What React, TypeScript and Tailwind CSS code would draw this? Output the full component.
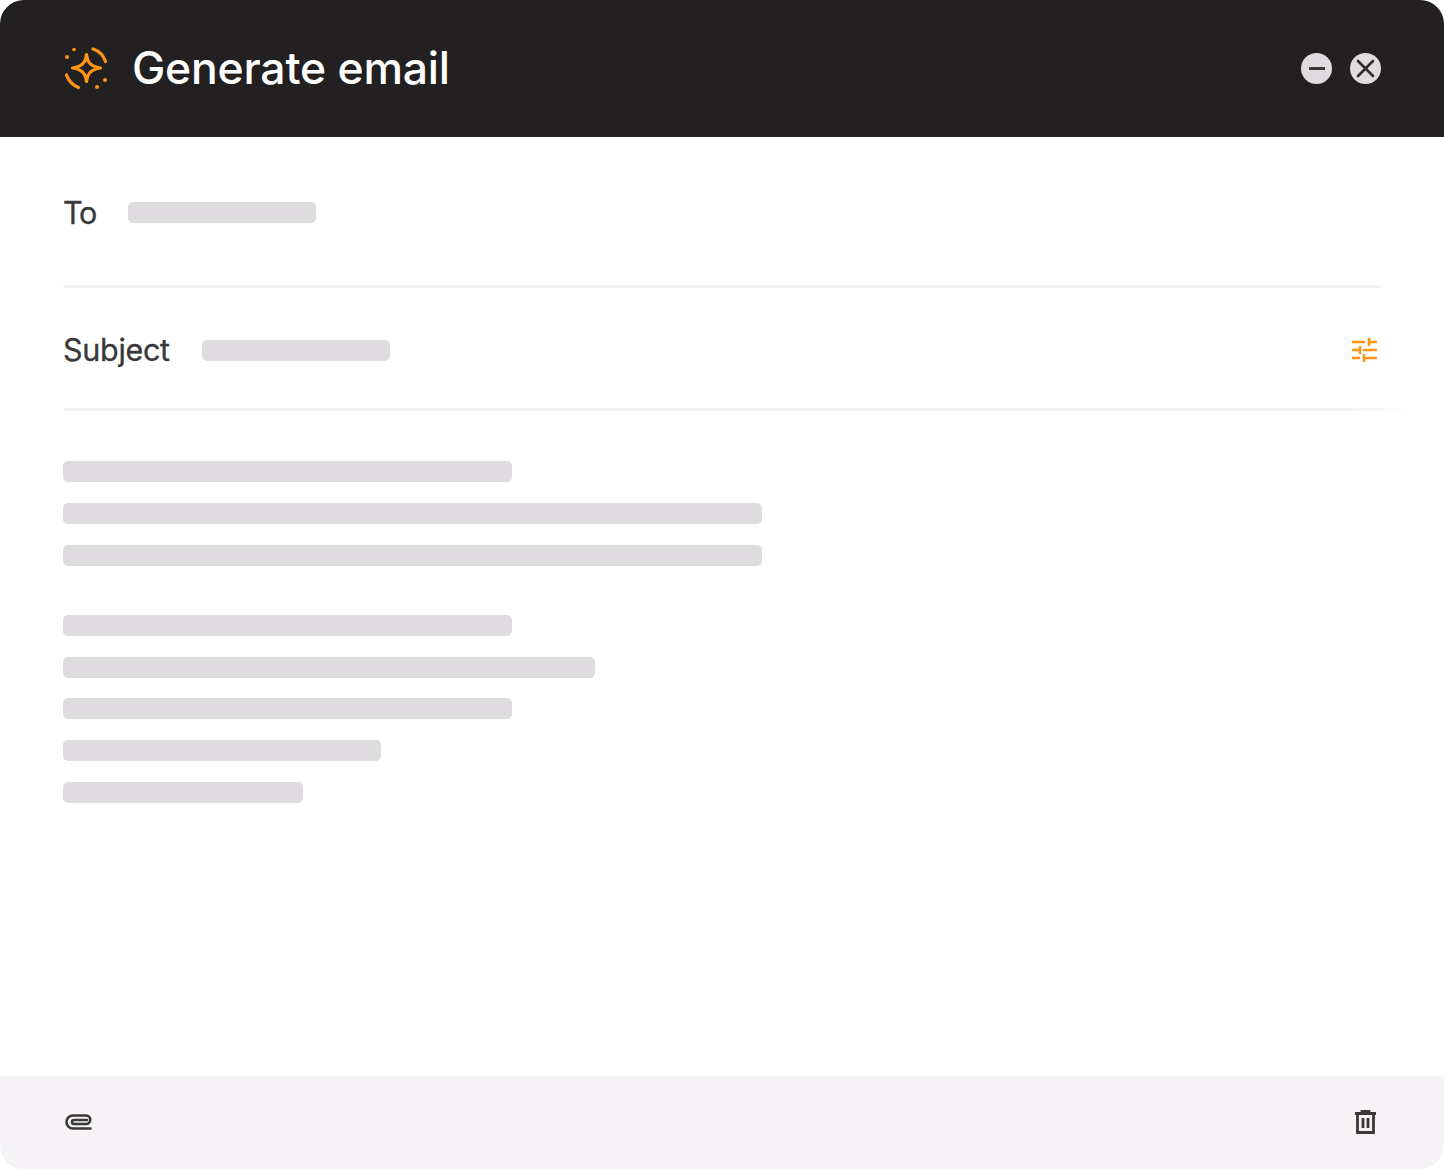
export default function App() {
  const lines1 = ["w-[449px]", "w-[699px]", "w-[699px]"];
  const lines2 = ["w-[449px]", "w-[532px]", "w-[449px]", "w-[318px]", "w-[240px]"];
  return (
    <div className="w-[1444px] h-[1170px] bg-white font-['Inter',sans-serif] flex flex-col">
      <div className="h-[1169px] flex flex-col rounded-[24px] overflow-hidden bg-white">
        <header className="h-[137px] shrink-0 bg-[#222021] flex items-center justify-between pl-[64px] pr-[63px]">
          <div className="flex items-center gap-[24px]">
            <svg width="45" height="45" viewBox="0 0 45 45" fill="none" stroke="#ff9414" strokeWidth="3.2" strokeLinecap="round" strokeLinejoin="round">
              <path d="M22.5 8.5 C23.5 17 27 20.5 36.5 22 C27 23.5 23.5 27 22.5 35.5 C21.5 27 18 23.5 8.5 22 C18 20.5 21.5 17 22.5 8.5 Z" />
              <path d="M29 3 C35 5 39.5 9.5 41.5 15.5" />
              <path d="M2.5 29 C4.5 35 8.5 39 14.5 41.5" />
              <circle cx="10" cy="3.5" r="1.8" fill="#ff9414" stroke="none" />
              <circle cx="3" cy="11" r="2" fill="#ff9414" stroke="none" />
              <circle cx="41" cy="34" r="2" fill="#ff9414" stroke="none" />
              <circle cx="33" cy="41" r="2" fill="#ff9414" stroke="none" />
            </svg>
            <h1 className="text-[44.5px] leading-none font-medium text-white tracking-[-0.2px] ml-[-1px]">Generate email</h1>
          </div>
          <div className="flex items-center gap-[18px]">
            <div className="w-[31px] h-[31px] rounded-full bg-[#dedcdf] flex items-center justify-center">
              <div className="w-[16px] h-[3px] bg-[#3a3839]" />
            </div>
            <div className="w-[31px] h-[31px] rounded-full bg-[#dedcdf] flex items-center justify-center">
              <svg width="19" height="19" viewBox="0 0 19 19" stroke="#2f2d2e" strokeWidth="2.6" strokeLinecap="round">
                <path d="M2 2 L17 17 M17 2 L2 17" />
              </svg>
            </div>
          </div>
        </header>

        <main className="flex-1 flex flex-col pl-[63px] pr-[63px]">
          <div className="h-[148px] shrink-0 flex items-start gap-[31px] pt-[65px]">
            <span className="w-[34px] text-[30.5px] leading-[22px] text-[#3a3839] tracking-[-1.2px] [-webkit-text-stroke:0.3px_#3a3839]">To</span>
            <div className="w-[188px] h-[21px] rounded-[5px] bg-[#dedcdf]" />
          </div>
          <div className="h-[3px] shrink-0 bg-[#f2f1f3] rounded-full" />
          <div className="h-[120px] shrink-0 flex items-center justify-between pt-[4px]">
            <div className="flex items-center gap-[31px]">
              <span className="w-[108px] text-[30.5px] leading-none text-[#3a3839] tracking-[-0.3px] [-webkit-text-stroke:0.3px_#3a3839]">Subject</span>
              <div className="w-[188px] h-[21px] rounded-[5px] bg-[#dedcdf]" />
            </div>
            <svg width="26" height="26" viewBox="0 0 26 26" fill="none" stroke="#ff9414" strokeWidth="2.6" className="mr-[3px] mt-[1px]">
              <path d="M0 4 H13 M17 4 H25 M17 0 V8 M0 12 H8 M11 12 H25 M8 8 V16 M0 20 H8 M12 20 H25 M12 16 V24" />
            </svg>
          </div>
          <div className="h-[3px] shrink-0 rounded-full bg-[#f2f1f3] mr-[-30px] [mask-image:linear-gradient(to_right,black_95%,transparent)]" />
          <div className="pt-[50px] flex flex-col gap-[21px]">
            {lines1.map((w, i) => (
              <div key={i} className={`${w} h-[21px] rounded-[5px] bg-[#dedcdf]`} />
            ))}
          </div>
          <div className="pt-[49px] flex flex-col gap-[20.7px]">
            {lines2.map((w, i) => (
              <div key={i} className={`${w} h-[21px] rounded-[5px] bg-[#dedcdf]`} />
            ))}
          </div>
        </main>

        <footer className="h-[93px] shrink-0 bg-[#f5f3f6] flex items-center justify-between pl-[65px] pr-[68px] pb-[2px]">
          <svg width="28" height="18" viewBox="0 0 28 18" fill="none" stroke="#3a3839" strokeWidth="2.6" strokeLinecap="round" strokeLinejoin="round">
            <path d="M25.5 15.5 H8 A6.5 6.5 0 0 1 8 2.5 H21 A4.2 4.2 0 0 1 21 11 H9 A2 2 0 0 1 9 7 H22" />
          </svg>
          <svg width="21" height="24" viewBox="0 0 21 24" fill="none" stroke="#3a3839" strokeWidth="2.8">
            <path d="M0 3.5 H21 M7 3.5 V1 H14 V3.5 M2.5 3.5 V22.5 H18.5 V3.5 M8 8 V18 M13 8 V18" />
          </svg>
        </footer>
      </div>
    </div>
  );
}
